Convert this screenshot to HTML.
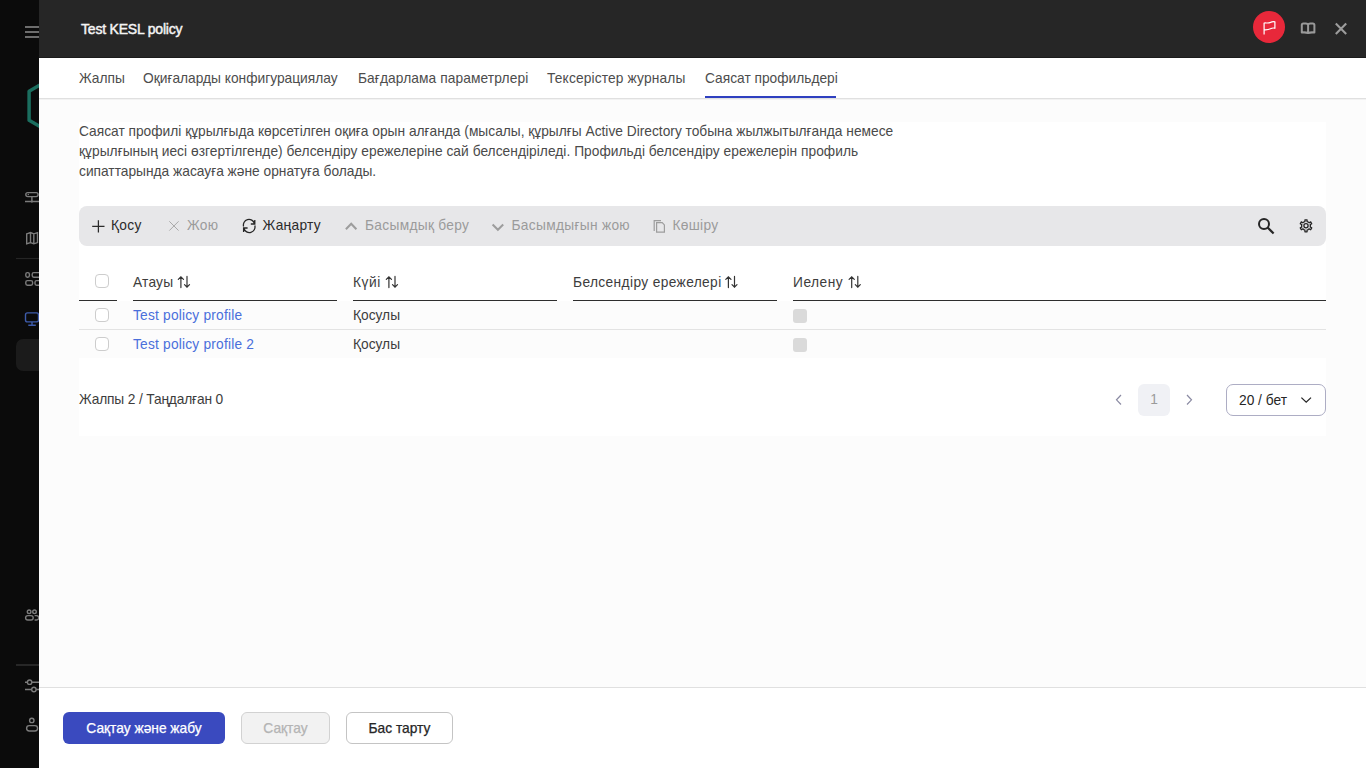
<!DOCTYPE html>
<html><head><meta charset="utf-8">
<style>
*{box-sizing:border-box;margin:0;padding:0}
html,body{width:1366px;height:768px;overflow:hidden;background:#0b0b0b;font-family:"Liberation Sans",sans-serif;color:#262626}
svg{position:absolute;overflow:visible}
#side{position:absolute;left:0;top:0;width:39px;height:768px;background:#0b0b0b;overflow:hidden}
#panel{position:absolute;left:39px;top:0;width:1327px;height:768px;background:#fcfcfc}
#hdr{position:absolute;left:0;top:0;width:1327px;height:58px;background:#262626;border-bottom:1px solid #1b1b1b}
#title{position:absolute;left:42px;top:21px;font-size:14px;font-weight:400;color:#f4f4f4;letter-spacing:-0.2px;-webkit-text-stroke:0.45px #f4f4f4;white-space:nowrap}
#tabs{position:absolute;left:0;top:58px;width:1327px;height:41px;background:#fff;border-bottom:1px solid #e0e0e0;box-shadow:0 1px 0 #f2f2f2}
.tab{position:absolute;top:13px;font-size:13.75px;color:#4d4d4d;white-space:nowrap}
#uline{position:absolute;left:666px;top:38px;width:131px;height:2px;background:#2f40c0}
#card{position:absolute;left:40px;top:122px;width:1247px;height:314px;background:#fff}
#desc{position:absolute;left:40px;top:122px;width:900px;font-size:13.75px;line-height:20px;color:#4a4a4a}
#tb{position:absolute;left:40px;top:206px;width:1247px;height:40px;background:#e7e7e9;border-radius:8px}
.ti{position:absolute;top:12px;font-size:13.75px;white-space:nowrap;color:#2b2b2b;letter-spacing:0.3px}
.dis{color:#9b9b9b}
.th{position:absolute;top:275px;font-size:13.75px;color:#3d3d3d;white-space:nowrap}
.hl{position:absolute;top:300px;height:1px;background:#2e2e2e}
.row{position:absolute;left:40px;width:1247px;background:#fcfcfc}
.td{position:absolute;font-size:13.75px;color:#3d3d3d;white-space:nowrap}
.lnk{color:#4a6fdb;letter-spacing:0.2px}
.cb{position:absolute;width:14px;height:14px;border:1px solid #cdcdcd;border-radius:4px;background:#fff}
.cbd{position:absolute;width:14px;height:14px;border-radius:3px;background:#dadada}
#foot{position:absolute;left:0;top:687px;width:1327px;height:81px;background:#fff;border-top:1px solid #e0e0e0}
.btn{position:absolute;top:24px;height:32px;border-radius:6px;font-size:13.75px;font-weight:400;-webkit-text-stroke:0.25px currentColor;text-align:center;line-height:32px;white-space:nowrap}
</style></head><body>
<div id="side">
  <!-- hamburger -->
  <div style="position:absolute;left:25px;top:26px;width:20px;height:2px;background:#6d6d6d"></div>
  <div style="position:absolute;left:25px;top:31px;width:20px;height:2px;background:#6d6d6d"></div>
  <div style="position:absolute;left:25px;top:36px;width:20px;height:2px;background:#6d6d6d"></div>
  <!-- logo hexagon -->
  
  <!-- server icon -->
  <svg style="left:0;top:0" width="40" height="768"><g fill="none" stroke="#7c7c7c" stroke-width="1.4">
    <rect x="25.8" y="192.6" width="12.3" height="4" rx="2"/><path d="M31.9 196.6 V201.5 M25 201.5 H46"/><circle cx="31.9" cy="201.6" r="1.1" fill="#7a7a7a" stroke="none"/><circle cx="28.3" cy="194.5" r="0.75" fill="#7a7a7a" stroke="none"/>
    <path d="M26.7 233.8 L30.5 232.6 L33.8 233.8 L37.5 232.6 V242.6 L33.8 243.8 L30.5 242.6 L26.7 243.8 Z M30.5 232.6 V242.6 M33.8 233.8 V243.8"/>
    <rect x="25.8" y="272.6" width="3.6" height="4.6" rx="1.6"/><rect x="32.2" y="272.6" width="9" height="4.6" rx="1.6"/>
    <rect x="25.8" y="280.6" width="6.8" height="4.6" rx="1.6"/><rect x="35" y="280.6" width="6" height="4.6" rx="1.6"/>
    <circle cx="29.1" cy="611.8" r="1.8"/><circle cx="34.5" cy="611.8" r="1.8"/><rect x="25.6" y="615.6" width="7.6" height="4.4" rx="2.2"/><path d="M34.6 615.6 H36.5 a2.2 2.2 0 0 1 0 4.4 H34.6"/>
    <path d="M25 682.2 H44 M25 689.5 H44"/><circle cx="29.6" cy="682.2" r="2.2" fill="#0b0b0b"/><circle cx="33.9" cy="689.5" r="2.2" fill="#0b0b0b"/>
    <circle cx="31.8" cy="720.4" r="2.2"/><rect x="26.6" y="725.6" width="11" height="5.4" rx="2.7"/>
  </g>
  <g fill="none" stroke="#3e5cab" stroke-width="1.4"><rect x="25.5" y="312.9" width="13" height="9" rx="2"/><path d="M32 321.9 V325.3 M28.3 325.3 H35.8"/></g>
  <path d="M16 258.5 H40" stroke="#252525" stroke-width="1.2"/><path d="M16 665 H40" stroke="#272727" stroke-width="2"/>
  <path d="M46 81.4 L29.1 91.2 V120.3 L46 130.1" fill="none" stroke="#1b6e5f" stroke-width="3.5" stroke-linejoin="round"/>
  </svg>
  <div style="position:absolute;left:16px;top:339px;width:40px;height:32px;background:#1b1b1b;border-radius:7px"></div>
</div>
<div id="panel">
  <div id="hdr"><div id="title">Test KESL policy</div>
    <div style="position:absolute;left:1214px;top:11px;width:32px;height:32px;border-radius:50%;background:#e8283a"></div>
    <svg style="left:0;top:0" width="1327" height="57"><g fill="none" stroke="#fff" stroke-width="1.2" stroke-linejoin="round">
      <path d="M1225.1 34.6 V23 C1227.5 22.8 1229.5 23.4 1231.5 22.4 C1233 21.6 1234.5 21.3 1235.9 21.9 V28.3 C1234.5 27.8 1233 28 1231.5 28.8 C1229.5 29.8 1227.5 30 1225.1 29.8"/></g>
      <g fill="none" stroke="#999" stroke-width="2" stroke-linejoin="round">
      <path d="M1262.8 32.6 V25 Q1262.8 23.4 1264.4 23.4 H1266.8 Q1269.1 23.4 1269.1 25 Q1269.1 23.4 1271.4 23.4 H1273.8 Q1275.4 23.4 1275.4 25 V32.6 Q1272.2 32 1269.1 33 Q1266 32 1262.8 32.6 Z M1269.1 25 V33"/></g>
      <path d="M1296.8 23.6 L1307.2 34 M1307.2 23.6 L1296.8 34" stroke="#9c9c9c" stroke-width="2.1"/>
    </svg>
  </div>
  <div id="tabs">
    <div class="tab" style="left:40px">Жалпы</div>
    <div class="tab" style="left:104px">Оқиғаларды конфигурациялау</div>
    <div class="tab" style="left:319px;letter-spacing:0.1px">Бағдарлама параметрлері</div>
    <div class="tab" style="left:508px;letter-spacing:0.15px">Тексерістер журналы</div>
    <div class="tab" style="left:666px">Саясат профильдері</div>
    <div id="uline"></div>
  </div>
  <div id="card"></div>
  <div id="desc">Саясат профилі құрылғыда көрсетілген оқиға орын алғанда (мысалы, құрылғы Active Directory тобына жылжытылғанда немесе<br><span style="letter-spacing:0.04px">құрылғының иесі өзгертілгенде) белсендіру ережелеріне сай белсендіріледі. Профильді белсендіру ережелерін профиль</span><br>сипаттарында жасауға және орнатуға болады.</div>
  <div id="tb">
    <svg style="left:0;top:0" width="1247" height="40"><g fill="none" stroke-width="1.5">
      <path d="M19.4 14.2 V26.6 M13.2 20.4 H25.5" stroke="#2b2b2b" stroke-width="1.25"/>
      <path d="M90.3 15.3 L99.6 24.6 M99.6 15.3 L90.3 24.6" stroke="#a9a9a9" stroke-width="1"/>
      <path d="M164.6 20.5 A5.6 5.6 0 0 1 175.4 17.5 M175.8 14 V18 H171.8 M175.8 19.5 A5.6 5.6 0 0 1 165 22.5 M164.6 26 V22 H168.6" stroke="#262626" stroke-width="1.3"/>
      <path d="M266.9 23.2 L272.2 17.7 L277.4 23.2" stroke="#9d9d9d" stroke-width="2"/>
      <path d="M413.6 18.5 L418.9 23.8 L424.2 18.5" stroke="#9d9d9d" stroke-width="2"/>
      <path d="M577.6 16.7 H583.2 L585.4 18.9 V26.2 H577.6 Z M575.2 25 V14.6 H582" stroke="#9d9d9d" stroke-width="1.2"/>
      <circle cx="1185" cy="17.9" r="5" stroke="#262626" stroke-width="2"/><path d="M1188.6 21.5 L1194.6 27.5" stroke="#262626" stroke-width="2.2"/>
      <path d="M1224.80 15.99 L1225.94 15.53 L1225.94 13.79 L1228.06 13.79 L1228.06 15.53 L1229.20 15.99 L1230.17 16.74 L1231.67 15.88 L1232.73 17.71 L1231.23 18.59 L1231.40 19.80 L1231.23 21.01 L1232.73 21.89 L1231.67 23.72 L1230.17 22.86 L1229.20 23.61 L1228.06 24.07 L1228.06 25.81 L1225.94 25.81 L1225.94 24.07 L1224.80 23.61 L1223.83 22.86 L1222.33 23.72 L1221.27 21.89 L1222.77 21.01 L1222.60 19.80 L1222.77 18.59 L1221.27 17.71 L1222.33 15.88 L1223.83 16.74 Z" stroke="#262626" stroke-width="1.3" stroke-linejoin="round"/>
      <circle cx="1227" cy="19.8" r="2.1" stroke="#262626" stroke-width="1.3"/>
    </g></svg>
    <div class="ti" style="left:32px">Қосу</div>
    <div class="ti dis" style="left:108px">Жою</div>
    <div class="ti" style="left:183.5px">Жаңарту</div>
    <div class="ti dis" style="left:286px">Басымдық беру</div>
    <div class="ti dis" style="left:432.5px">Басымдығын жою</div>
    <div class="ti dis" style="left:593.5px">Көшіру</div>
  </div>
  <!-- table header -->
  <div class="cb" style="left:56px;top:274px"></div>
  <div class="th" style="left:94px;letter-spacing:0.2px">Атауы</div>
  <div class="th" style="left:314px;letter-spacing:0.6px">Күйі</div>
  <div class="th" style="left:534px;letter-spacing:0.37px">Белсендіру ережелері</div>
  <div class="th" style="left:754px;letter-spacing:0.5px">Иелену</div>
  <svg style="left:0;top:0" width="1327" height="400"><g fill="none" stroke="#333" stroke-width="1.2" stroke-linecap="round"><path d="M141.9 287.6 V276.8 M139.3 279.4 L141.9 276.8 L144.5 279.4 M148.0 276.4 V287.2 M145.5 284.6 L148.0 287.2 L150.5 284.6"/><path d="M349.9 287.6 V276.8 M347.3 279.4 L349.9 276.8 L352.5 279.4 M356.0 276.4 V287.2 M353.5 284.6 L356.0 287.2 L358.5 284.6"/><path d="M689.4 287.6 V276.8 M686.8 279.4 L689.4 276.8 L692.0 279.4 M695.5 276.4 V287.2 M693.0 284.6 L695.5 287.2 L698.0 284.6"/><path d="M812.7 287.6 V276.8 M810.1 279.4 L812.7 276.8 L815.3 279.4 M818.8 276.4 V287.2 M816.3 284.6 L818.8 287.2 L821.3 284.6"/></g></svg>
  <div class="hl" style="left:40px;width:38px"></div>
  <div class="hl" style="left:94px;width:204px"></div>
  <div class="hl" style="left:314px;width:204px"></div>
  <div class="hl" style="left:534px;width:204px"></div>
  <div class="hl" style="left:754px;width:533px"></div>
  <div class="row" style="top:301px;height:29px;border-bottom:1px solid #e3e3e3"></div>
  <div class="row" style="top:330px;height:28px"></div>
  <div class="cb" style="left:56px;top:308px"></div>
  <div class="td lnk" style="left:94px;top:308px">Test policy profile</div>
  <div class="td" style="left:314px;top:308px">Қосулы</div>
  <div class="cbd" style="left:754px;top:309px"></div>
  <div class="cb" style="left:56px;top:337px"></div>
  <div class="td lnk" style="left:94px;top:337px">Test policy profile 2</div>
  <div class="td" style="left:314px;top:337px">Қосулы</div>
  <div class="cbd" style="left:754px;top:338px"></div>
  <!-- pagination -->
  <div class="td" style="left:40px;top:392px;letter-spacing:-0.15px">Жалпы 2 / Таңдалған 0</div>
  <svg style="left:0;top:0" width="1327" height="420"><g fill="none" stroke="#8a8aa2" stroke-width="1.2">
    <path d="M1082 395 L1077.5 399.8 L1082 404.5"/><path d="M1148 395 L1152.5 399.8 L1148 404.5"/></g>
    <path d="M1262.4 397.6 L1267.2 402.2 L1272 397.6" fill="none" stroke="#262626" stroke-width="1.3"/>
  </svg>
  <div style="position:absolute;left:1099px;top:384px;width:32px;height:32px;background:#f0f1f5;border-radius:6px;font-size:13.75px;color:#9a9a9a;text-align:center;line-height:32px">1</div>
  <div style="position:absolute;left:1187px;top:384px;width:100px;height:32px;border:1px solid #adadc4;border-radius:7px;font-size:13.75px;color:#262626;line-height:32px;padding-left:12px">20 / бет</div>
  <div id="foot">
    <div class="btn" style="left:24px;width:162px;background:#3a4abf;color:#fff;line-height:34px">Сақтау және жабу</div>
    <div class="btn" style="left:202px;width:89px;background:#f2f2f2;border:1px solid #d2d2d2;color:#b4b4b4">Сақтау</div>
    <div class="btn" style="left:307px;width:107px;background:#fff;border:1px solid #c4c4c4;color:#262626">Бас тарту</div>
  </div>
</div>
</body></html>
